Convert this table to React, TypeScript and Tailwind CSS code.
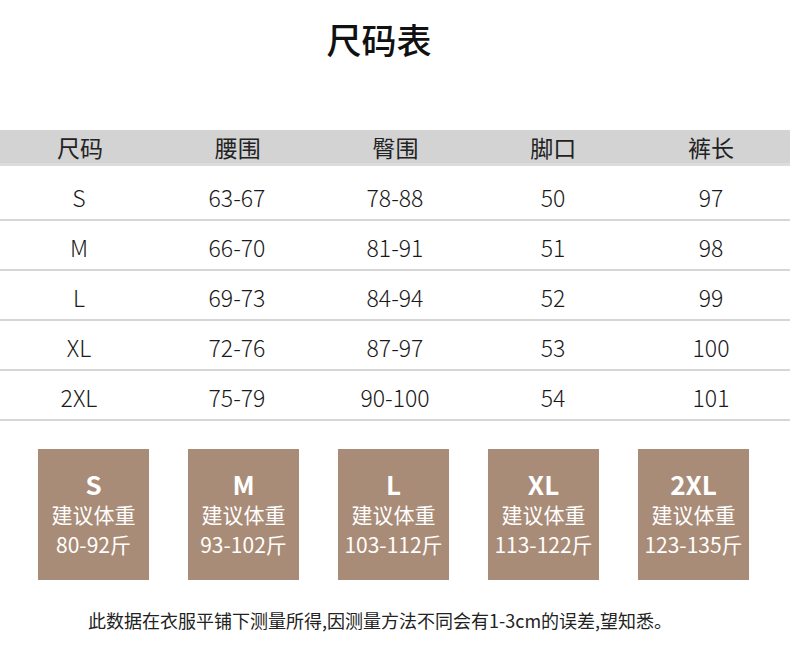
import React from "react";

const font = { fontFamily: '"Noto Sans CJK SC", "Noto Sans", sans-serif' };

const header = ["尺码", "腰围", "臀围", "脚口", "裤长"];
const rows = [
  ["S", "63-67", "78-88", "50", "97"],
  ["M", "66-70", "81-91", "51", "98"],
  ["L", "69-73", "84-94", "52", "99"],
  ["XL", "72-76", "87-97", "53", "100"],
  ["2XL", "75-79", "90-100", "54", "101"],
];
const cards = [
  ["S", "80-92斤"],
  ["M", "93-102斤"],
  ["L", "103-112斤"],
  ["XL", "113-122斤"],
  ["2XL", "123-135斤"],
];

export default function App() {
  return (
    <div className="w-[790px] h-[659px] bg-white text-[#1a1a1a] overflow-hidden" style={font}>
      <div className="h-[130px] pt-[17px] pr-[32px] flex justify-center">
        <div className="text-[35px] leading-[44px] font-medium text-[#111]">尺码表</div>
      </div>
      <div className="h-[36px] bg-[#d3d3d3] border-b-[3px] border-[#dcdcdc] grid grid-cols-5 pl-[1px]">
        {header.map((h) => (
          <div key={h} className="flex items-center justify-center text-[23px] leading-none text-[#222] pt-[1px]">
            {h}
          </div>
        ))}
      </div>
      <div className="pt-[5px]">
        {rows.map((r) => (
          <div key={r[0]} className="h-[50px] grid grid-cols-5 border-b-[2px] border-[#d6d6d6]">
            {r.map((c, i) => (
              <div key={i} className="flex items-center justify-center text-[23px] leading-none font-light text-[#1a1a1a] pt-[4px]">
                {c}
              </div>
            ))}
          </div>
        ))}
      </div>
      <div className="flex gap-[39px] pl-[38px] pt-[28px]">
        {cards.map(([s, w]) => (
          <div key={s} className="w-[111px] h-[131px] bg-[#a98c77] flex flex-col items-center text-white pt-[20px]">
            <div className="text-[26px] leading-[30px] font-bold">{s}</div>
            <div className="text-[21px] leading-[30px]">建议体重</div>
            <div className="text-[21px] leading-[30px]">{w}</div>
          </div>
        ))}
      </div>
      <div className="pt-[28px] pl-[88px] text-[18px] leading-[24px] text-[#222]">
        此数据在衣服平铺下测量所得,因测量方法不同会有1-3cm的误差,望知悉。
      </div>
    </div>
  );
}
